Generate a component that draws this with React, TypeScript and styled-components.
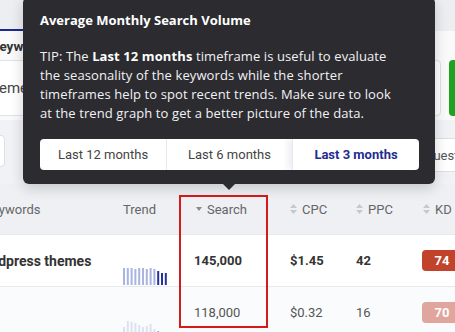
import styled, { createGlobalStyle } from "styled-components";

const GlobalStyle = createGlobalStyle`
  html, body {
    margin: 0;
    padding: 0;
  }
  body {
    width: 455px;
    height: 332px;
    overflow: hidden;
    background: #f4f5f7;
    font-family: Roboto, "Liberation Sans", sans-serif;
    color: #333;
  }
`;

const Page = styled.div`
  position: relative;
  width: 455px;
  height: 332px;
  overflow: hidden;
`;

/* ---------- background: search form ---------- */

const TabStrip = styled.div`
  height: 31px;
  background: #eceef2;
  display: flex;
  align-items: flex-end;
  margin-left: -60px;
`;

const Tab = styled.div<{ $active?: boolean }>`
  width: 90px;
  height: 31px;
  box-sizing: border-box;
  border-bottom: 2px solid ${(p) => (p.$active ? "#1b2a8c" : "transparent")};
`;

const FormBody = styled.div`
  background: #fafafb;
  padding: 6px 0 4px;
`;

const FieldLabel = styled.div`
  margin-left: -9px;
  font-size: 13.5px;
  font-weight: 700;
  line-height: 18px;
  color: #333;
  margin-bottom: 5px;
`;

const FieldRow = styled.div`
  display: grid;
  grid-template-columns: 546px 120px;
  gap: 8px;
  margin-left: -105px;
  height: 56px;
`;

const KeywordInput = styled.div`
  display: flex;
  align-items: center;
  padding-left: 16px;
  background: #fff;
  border: 1px solid #dfe2e7;
  border-radius: 4px;
  font-size: 15px;
  color: #444;
`;

const FindButton = styled.div`
  background: #1fa21f;
  border-radius: 4px;
`;

const FilterRow = styled.div`
  height: 64px;
  box-sizing: border-box;
  background: #f1f2f5;
  display: flex;
  justify-content: space-between;
  align-items: flex-start;
  padding-top: 15px;
`;

const FilterButton = styled.div`
  margin-left: -80px;
  width: 85px;
  height: 32px;
  box-sizing: border-box;
  background: #fff;
  border: 1px solid #dcdfe5;
  border-radius: 4px;
`;

const FilterInput = styled.div`
  margin-top: 3px;
  margin-right: -160px;
  width: 200px;
  height: 34px;
  box-sizing: border-box;
  padding-left: 10px;
  display: flex;
  align-items: center;
  background: #fff;
  border: 1px solid #dcdfe5;
  border-radius: 4px;
  font-size: 13px;
  color: #555;
`;

/* ---------- background: results table ---------- */

const Grid = styled.div`
  display: grid;
  grid-template-columns: 153px 71px 96px 66px 66px 80px;
  margin-left: -30px;
`;

const HeadRow = styled(Grid)`
  height: 50px;
  background: #eef0f4;
  align-items: center;
  font-size: 13px;
  color: #666;
`;

const HeadCell = styled.div<{ $pad?: number }>`
  display: flex;
  align-items: center;
  gap: 5px;
  padding-left: ${(p) => p.$pad ?? 0}px;
`;

const BodyRow = styled(Grid)<{ $muted?: boolean }>`
  height: 52px;
  align-items: center;
  background: ${(p) => (p.$muted ? "#fafbfc" : "#fff")};
  border-top: 1px solid #e7e9ed;
  box-sizing: border-box;
  font-size: 13px;
  color: ${(p) => (p.$muted ? "#555" : "#333")};
  font-weight: ${(p) => (p.$muted ? 400 : 700)};
`;

const KeywordCell = styled.div`
  padding-left: 5px;
  font-size: 14px;
  font-weight: 700;
  color: #333;
`;

const TrendCell = styled.div`
  align-self: end;
  height: 26px;
`;

const Badge = styled.div<{ $tone: string }>`
  width: 40px;
  height: 21px;
  border-radius: 4px;
  background: ${(p) => p.$tone};
  color: #fff;
  font-weight: 700;
  font-size: 13px;
  display: flex;
  align-items: center;
  justify-content: center;
`;

/* ---------- overlays ---------- */

const Tooltip = styled.div`
  position: absolute;
  left: 23px;
  top: -3px;
  width: 412px;
  height: 187px;
  box-sizing: border-box;
  padding: 13px 16px 0 17px;
  background: #2b2b30;
  border-radius: 6px;
  box-shadow: 0 4px 14px rgba(0, 0, 0, 0.18);
  color: #f2f2f4;
  font-family: "Open Sans", "DejaVu Sans", sans-serif;

  &::after {
    content: "";
    position: absolute;
    left: 200px;
    bottom: -6px;
    border-left: 6px solid transparent;
    border-right: 6px solid transparent;
    border-top: 6px solid #2b2b30;
  }
`;

const TipTitle = styled.div`
  font-size: 13px;
  font-weight: 700;
  line-height: 20px;
  color: #fff;
`;

const TipBody = styled.p`
  margin: 16.5px 0 0;
  font-size: 13px;
  line-height: 19.3px;
  letter-spacing: 0.1px;

  b {
    font-weight: 700;
    color: #fff;
  }
`;

const Segments = styled.div`
  margin-top: 15.5px;
  width: 379px;
  height: 31px;
  display: grid;
  grid-template-columns: 126px 126px 127px;
  background: #fff;
  border-radius: 4px;
  overflow: hidden;
`;

const Segment = styled.div<{ $active?: boolean }>`
  display: flex;
  align-items: center;
  justify-content: center;
  font-family: Roboto, "Liberation Sans", sans-serif;
  font-size: 13px;
  color: ${(p) => (p.$active ? "#1f2d8f" : "#444")};
  font-weight: ${(p) => (p.$active ? 700 : 400)};
  box-shadow: ${(p) => (p.$active ? "-4px 0 6px rgba(30, 40, 120, 0.08)" : "none")};
  & + & {
    border-left: 1px solid #e8e9ee;
  }
`;

const Highlight = styled.div`
  position: absolute;
  left: 179px;
  top: 195px;
  width: 89px;
  height: 133px;
  box-sizing: border-box;
  border: 2.5px solid #d31b1b;
`;

function SortIcon({ active }: { active?: boolean }) {
  if (active) {
    return (
      <svg width="6" height="4" viewBox="0 0 6 4">
        <path d="M0 0h6L3 4z" fill="#8a8a8a" />
      </svg>
    );
  }
  return (
    <svg width="7" height="10" viewBox="0 0 7 10">
      <path d="M0 4h7L3.5 0z M0 6h7L3.5 10z" fill="#c6c8cc" />
    </svg>
  );
}

function TrendBars({ heights, dark, faded }: { heights: number[]; dark: number; faded?: boolean }) {
  return (
    <svg width="46" height="26" viewBox="0 0 46 26" style={{ opacity: faded ? 0.35 : 1 }}>
      {heights.map((h, i) => (
        <rect
          key={i}
          x={i * 3.8}
          y={25 - h}
          width="2"
          height={h}
          fill={i >= heights.length - dark ? "#24339a" : "#aab4e2"}
        />
      ))}
    </svg>
  );
}

export default function App() {
  return (
    <>
      <GlobalStyle />
      <Page>
        <TabStrip>
          <Tab $active />
          <Tab />
        </TabStrip>
        <FormBody>
          <FieldLabel>Keywords</FieldLabel>
          <FieldRow>
            <KeywordInput>wordpress themes</KeywordInput>
            <FindButton />
          </FieldRow>
        </FormBody>
        <FilterRow>
          <FilterButton />
          <FilterInput>questions</FilterInput>
        </FilterRow>

        <HeadRow>
          <HeadCell $pad={14}>Keywords</HeadCell>
          <HeadCell>Trend</HeadCell>
          <HeadCell $pad={2}>
            <SortIcon active />
            Search
          </HeadCell>
          <HeadCell>
            <SortIcon />
            CPC
          </HeadCell>
          <HeadCell>
            <SortIcon />
            PPC
          </HeadCell>
          <HeadCell $pad={1}>
            <SortIcon />
            KD
          </HeadCell>
        </HeadRow>
        <BodyRow>
          <KeywordCell>wordpress themes</KeywordCell>
          <TrendCell>
            <TrendBars heights={[17, 17, 17, 16, 17, 17, 16, 17, 16, 14, 12, 12]} dark={3} />
          </TrendCell>
          <div>145,000</div>
          <div>$1.45</div>
          <div>42</div>
          <Badge $tone="#c1432b">74</Badge>
        </BodyRow>
        <BodyRow $muted>
          <KeywordCell />
          <TrendCell>
            <TrendBars heights={[10, 16, 15, 14, 12, 10, 11, 13, 8, 6, 4, 4]} dark={3} faded />
          </TrendCell>
          <div>118,000</div>
          <div>$0.32</div>
          <div>16</div>
          <Badge $tone="#e0a59c">70</Badge>
        </BodyRow>

        <Highlight />

        <Tooltip>
          <TipTitle>Average Monthly Search Volume</TipTitle>
          <TipBody>
            TIP: The <b>Last 12 months</b> timeframe is useful to evaluate
            <br />
            the seasonality of the keywords while the shorter
            <br />
            timeframes help to spot recent trends. Make sure to look
            <br />
            at the trend graph to get a better picture of the data.
          </TipBody>
          <Segments>
            <Segment>Last 12 months</Segment>
            <Segment>Last 6 months</Segment>
            <Segment $active>Last 3 months</Segment>
          </Segments>
        </Tooltip>
      </Page>
    </>
  );
}
